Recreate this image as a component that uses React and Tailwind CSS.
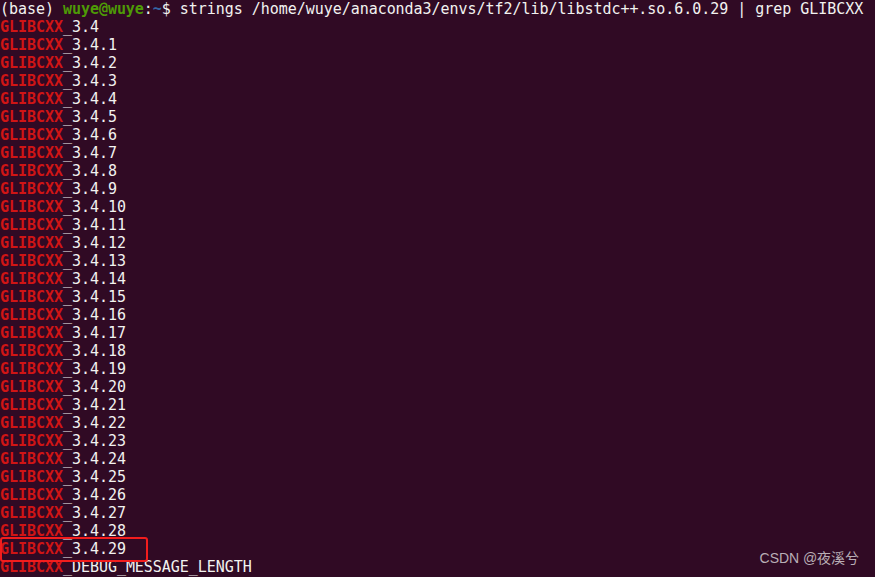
import React from 'react';

const versions = ['3.4', ...Array.from({ length: 29 }, (_, i) => `3.4.${i + 1}`), 'DEBUG_MESSAGE_LENGTH'];

const Line = ({ children }) => <div className="h-[18px] leading-[19px] whitespace-pre">{children}</div>;

const App = () => {
  return (
    <div
      className="relative w-[875px] h-[577px] overflow-hidden bg-[#300a24] text-[#f2f2f0] text-[15px] tracking-[-0.04px]"
      style={{ fontFamily: '"DejaVu Sans Mono", "Liberation Mono", monospace' }}
    >
      <Line>
        (base) <span className="font-bold text-[#4e9a06]">wuye@wuye</span>:<span className="font-bold text-[#3465a4]">~</span>$ strings /home/wuye/anaconda3/envs/tf2/lib/libstdc++.so.6.0.29 | grep GLIBCXX
      </Line>
      {versions.map((v) => (
        <Line key={v}>
          <span className="font-bold text-[#d01515]">GLIBCXX</span>_{v}
        </Line>
      ))}

      <div className="absolute left-0 top-[537px] w-[148px] h-[25px] rounded-[3px] border-2 border-[#f21d1d]" />

      <div
        className="absolute right-[16px] top-[548px] text-[14px] text-[#b9aeb5]"
        style={{ fontFamily: '"Liberation Sans", "Noto Sans CJK SC", sans-serif' }}
      >
        CSDN @夜溪兮
      </div>
    </div>
  );
};

export default App;
